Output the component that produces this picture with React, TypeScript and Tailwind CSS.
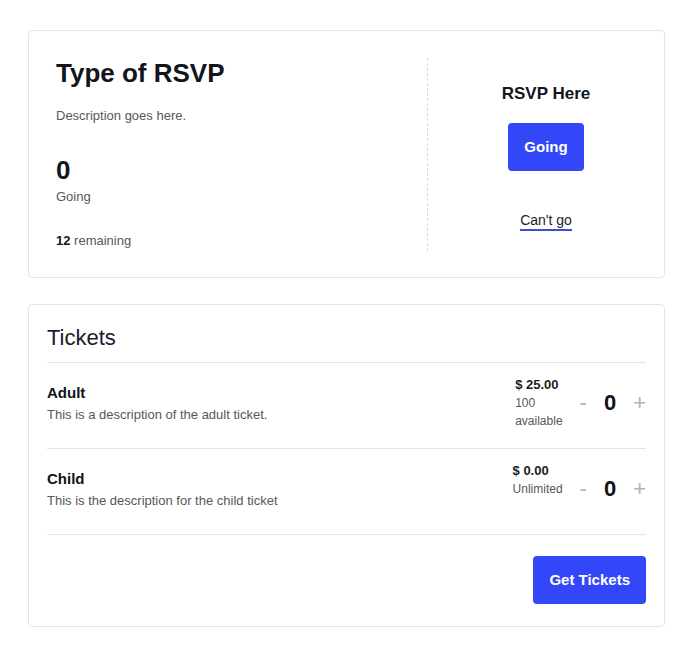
import { Fragment } from 'react';

type Ticket = {
  name: string;
  description: string;
  price: string;
  availability: string[];
  quantity: number;
};

const tickets: Ticket[] = [
  {
    name: 'Adult',
    description: 'This is a description of the adult ticket.',
    price: '$ 25.00',
    availability: ['100', 'available'],
    quantity: 0,
  },
  {
    name: 'Child',
    description: 'This is the description for the child ticket',
    price: '$ 0.00',
    availability: ['Unlimited'],
    quantity: 0,
  },
];

function RsvpCard() {
  return (
    <section className="flex rounded-[4px] border border-[#e4e4e4] bg-white pt-[27px] pb-[26px]">
      <div className="w-[399px] border-r border-dashed border-[#dcdcdc] pl-[27px]">
        <h1 className="text-[26px] font-bold leading-[31px] text-[#14141c]">Type of RSVP</h1>
        <p className="mt-[17px] text-[13px] leading-[20px] text-[#575757]">Description goes here.</p>
        <div className="mt-[29px] text-[26px] font-bold leading-[31px] text-[#14141c]">0</div>
        <div className="mt-px text-[13px] leading-[20px] text-[#575757]">Going</div>
        <p className="mt-[24px] text-[13px] leading-[20px] text-[#575757]">
          <span className="font-bold text-[#14141c]">12</span> remaining
        </p>
      </div>

      <div className="flex flex-1 flex-col items-center pt-[26px]">
        <h2 className="text-[17px] font-bold leading-[20px] text-[#14141c]">RSVP Here</h2>
        <button className="mt-[19px] h-12 rounded-[4px] bg-[#3347f8] px-4 text-[15px] font-bold text-white">
          Going
        </button>
        <button className="mt-[41px] border-b-2 border-[#3a4fd6] text-[14px] leading-[17px] text-[#1c1c24]">
          Can't go
        </button>
      </div>
    </section>
  );
}

function TicketRow({ ticket }: { ticket: Ticket }) {
  return (
    <div className="flex h-[86px] items-start justify-between border-b border-[#e4e4e4] pt-[13px]">
      <div className="mt-[7px]">
        <div className="text-[15px] font-bold leading-[20px] text-[#111118]">{ticket.name}</div>
        <div className="mt-[2px] text-[13px] leading-[20px] text-[#575757]">{ticket.description}</div>
      </div>

      <div className="flex items-start gap-[17px]">
        <div className="whitespace-nowrap">
          <div className="text-[13px] font-bold leading-[18px] text-[#1c1c1c]">{ticket.price}</div>
          <div className="text-[12px] leading-[18px] text-[#575757]">
            {ticket.availability.map((line, i) => (
              <Fragment key={line}>
                {i > 0 && <br />}
                {line}
              </Fragment>
            ))}
          </div>
        </div>
        <div className="mt-[14px] flex items-center gap-[17px] text-[22px] leading-[26px]">
          <button className="text-[#b4b4b4]">-</button>
          <span className="font-bold text-[#111118]">{ticket.quantity}</span>
          <button className="text-[#b4b4b4]">+</button>
        </div>
      </div>
    </div>
  );
}

function TicketsCard() {
  return (
    <section className="mt-[26px] rounded-[4px] border border-[#e4e4e4] bg-white px-[18px] pt-[20px] pb-[22px]">
      <h2 className="border-b border-[#e4e4e4] pb-[11px] text-[22px] leading-[26px] text-[#1e1a2c]">Tickets</h2>
      {tickets.map((ticket) => (
        <TicketRow key={ticket.name} ticket={ticket} />
      ))}
      <div className="flex justify-end pt-[21px]">
        <button className="h-12 rounded-[4px] bg-[#3347f8] px-4 text-[15px] font-bold text-white">
          Get Tickets
        </button>
      </div>
    </section>
  );
}

export default function App() {
  return (
    <main className="min-h-screen bg-white px-7 pt-[30px] pb-[30px] font-['Liberation_Sans',Arial,sans-serif]">
      <RsvpCard />
      <TicketsCard />
    </main>
  );
}
